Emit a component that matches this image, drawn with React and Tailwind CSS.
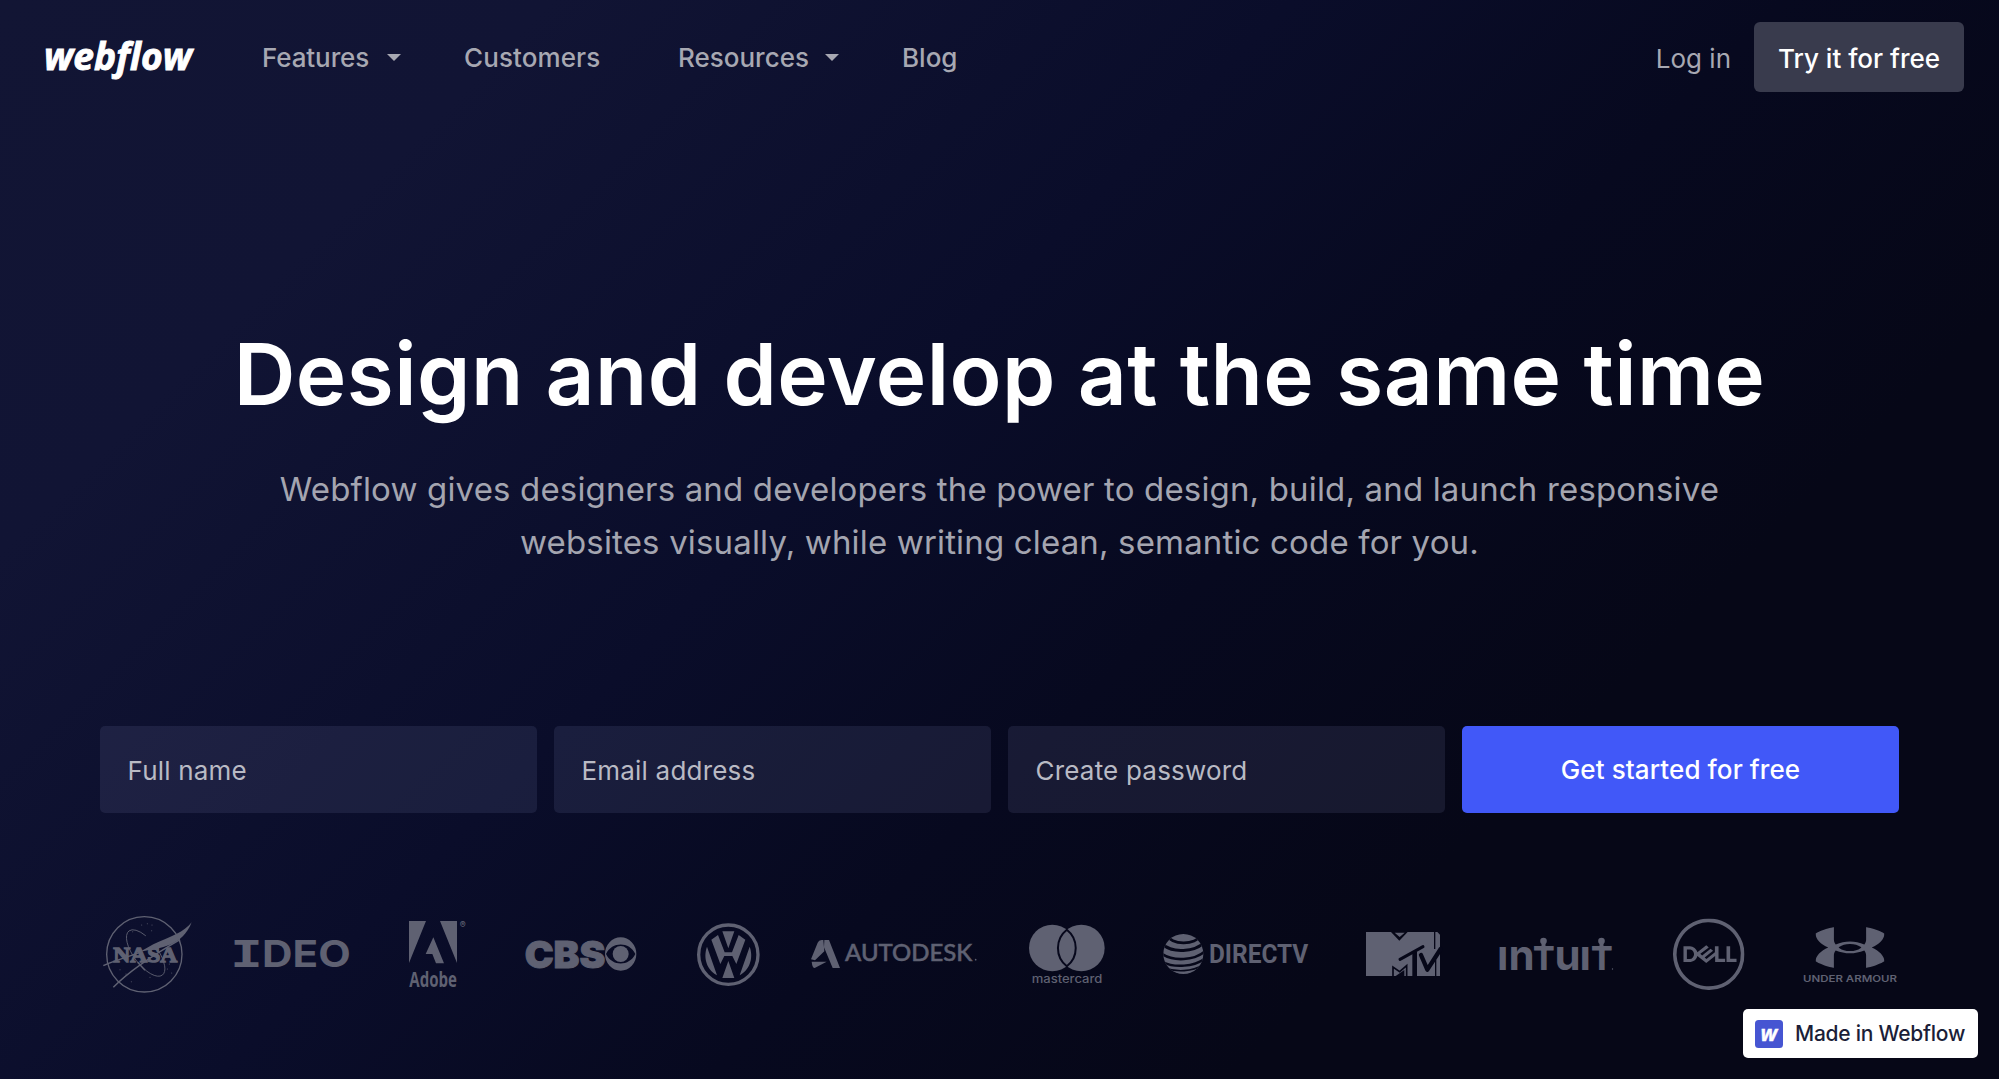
import { SiDell, SiUnderarmour } from "react-icons/si";

const INK = "#5f6172";

function Caret() {
  return (
    <svg width="14" height="7" viewBox="0 0 14 7" fill="currentColor">
      <path d="M0 0h14L7 7z" />
    </svg>
  );
}

function Wordmark() {
  return (
    <svg width="152" height="50" viewBox="44 32 152 50" className="shrink-0 overflow-visible">
      <text x="44" y="69.500" textLength="148" lengthAdjust="spacingAndGlyphs" fill="#fff" stroke="#fff" strokeWidth="0.9" fontFamily="'Open Sans', sans-serif" fontWeight="700" fontStyle="italic" fontSize="37.500">
        webflow
      </text>
    </svg>
  );
}

function Nasa() {
  return (
    <svg width="100" height="80" viewBox="30 45 300 240" fill={INK}>
      <circle cx="163" cy="166" r="113" fill="none" stroke={INK} strokeWidth="4" />
      <ellipse cx="167" cy="162" rx="83" ry="36" transform="rotate(53 167 162)" fill="none" stroke={INK} strokeWidth="2.500" strokeDasharray="250 60 400" />
      <path d="M305 70C285 98 240 114 190 136L150 158C215 148 278 140 305 70Z" />
      <path d="M70 265C112 222 190 168 270 122M40 200C58 190 90 182 150 160M143 190L165 214" fill="none" stroke={INK} strokeWidth="4.500" />
      <text x="70" y="188" textLength="192" lengthAdjust="spacingAndGlyphs" fontFamily="'Liberation Serif', serif" fontWeight="700" fontSize="66" stroke={INK} strokeWidth="4">NASA</text>
      {[[155, 78], [172, 74], [186, 78], [128, 98], [185, 95], [108, 225], [124, 248], [232, 210], [238, 195], [90, 212], [180, 235], [245, 222]].map(([x, y]) => (
        <circle key={x + "-" + y} cx={x} cy={y} r="1.500" />
      ))}
    </svg>
  );
}

function Ideo() {
  return (
    <svg width="123" height="80" viewBox="420 45 369 240" fill={INK} fontSize="110" fontWeight="700">
      <text x="420" y="205" textLength="99" lengthAdjust="spacingAndGlyphs" fontFamily="'DejaVu Sans Mono', monospace">I</text>
      <text x="516" y="205" textLength="266" lengthAdjust="spacingAndGlyphs" fontFamily="Inter, sans-serif">DEO</text>
    </svg>
  );
}

function Adobe() {
  return (
    <svg width="66" height="80" viewBox="945 45 198 240" fill={INK} className="overflow-visible">
      <path d="M957 66h51l-51 126zM1050 66h51v126zM1030 115l32 78h-24l-11-28h-20z" />
      <text x="958" y="264" textLength="143" lengthAdjust="spacingAndGlyphs" fontFamily="'Open Sans', sans-serif" fontWeight="700" fontSize="63">Adobe</text>
      <text x="1109" y="86" fontFamily="Inter, sans-serif" fontSize="27" fontWeight="600">®</text>
    </svg>
  );
}

function Cbs() {
  return (
    <svg width="118" height="80" viewBox="96 45 354 240" fill={INK}>
      <text x="104" y="207" textLength="242" lengthAdjust="spacingAndGlyphs" fontFamily="Inter, sans-serif" fontWeight="900" fontSize="111" stroke={INK} strokeWidth="3">CBS</text>
      <path fillRule="evenodd" d="M392 115a47 50 0 0 1 0 100a47 50 0 0 1 0-100zM348 165C366 203 418 203 436 165C418 127 366 127 348 165z" />
      <circle cx="392" cy="165" r="24" />
    </svg>
  );
}

function Volkswagen() {
  return (
    <svg width="67" height="80" viewBox="615 45 201 240" fill={INK}>
      <circle cx="715" cy="167" r="89" fill="none" stroke={INK} strokeWidth="10" />
      <path d="M697 97h36l-18 51zM715 186l18 51h-36z" />
      <path d="M664 122l20-14 20 52h22l20-52 20 14-27 73-12-24h-24l-12 24z" />
      <path d="M651 143C641 170 645 208 681 229zM779 143C789 170 785 208 749 229z" />
    </svg>
  );
}

function Autodesk() {
  return (
    <svg width="172" height="80" viewBox="954 45 516 240" fill={INK}>
      <path d="M963 181l20-50q3-8 12-8h5l3 34-28 27zM1003 123h14l33 84h-22l-26-62zM965 188h45l-36 19q-7 0-9-19z" />
      <text x="1065" y="185" textLength="382" lengthAdjust="spacingAndGlyphs" fontFamily="Lato, sans-serif" fontWeight="500" fontSize="67" stroke={INK} strokeWidth="1.500">AUTODESK</text>
      <circle cx="1457" cy="182" r="2.500" />
    </svg>
  );
}

function Mastercard() {
  return (
    <svg width="84" height="80" viewBox="105 45 252 240" fill={INK}>
      <circle cx="187" cy="147" r="70" />
      <circle cx="274" cy="147" r="70" />
      <path d="M230.500 92A70 70 0 0 0 230.500 202A70 70 0 0 0 230.500 92z" fill="none" stroke="#07081c" strokeWidth="6" />
      <text x="125" y="251" textLength="212" lengthAdjust="spacingAndGlyphs" fontFamily="Inter, sans-serif" fontWeight="500" fontSize="34">mastercard</text>
    </svg>
  );
}

function Directv() {
  return (
    <svg width="152" height="80" viewBox="510 45 456 240" fill={INK}>
      <clipPath id="globe"><circle cx="580" cy="165" r="60" /></clipPath>
      <g clipPath="url(#globe)">
        <rect x="518" y="103" width="124" height="124" />
        <g fill="none" stroke="#060719">
          <path d="M532 106C538 140 622 140 630 108" strokeWidth="8" />
          <path d="M515 134C545 164 615 160 645 128" strokeWidth="9" />
          <path d="M510 160C545 190 618 186 650 152" strokeWidth="8" />
          <path d="M515 187C550 208 615 204 648 176" strokeWidth="7" />
          <path d="M525 207C560 220 605 218 640 198" strokeWidth="5" />
        </g>
      </g>
      <text x="657" y="191" textLength="298" lengthAdjust="spacingAndGlyphs" fontFamily="Roboto, sans-serif" fontWeight="700" fontSize="75">DIRECTV</text>
    </svg>
  );
}

function Mtv() {
  return (
    <svg width="82" height="80" viewBox="1116 45 246 240" fill={INK}>
      <path d="M1128 99h75l25 26 25-26h89l8 8v124h-222zM1214 101h30l-15 13z" />
      <g fill="none" stroke="#060718">
        <path d="M1334 97V150M1337 182V232" strokeWidth="4" />
        <path d="M1230 181L1299 143" strokeWidth="9" strokeLinecap="round" />
        <path d="M1274 158V232" strokeWidth="14" />
        <path d="M1293 168L1312 212L1352 150" strokeWidth="13" strokeLinecap="round" strokeLinejoin="round" />
        <path d="M1209 232V204L1229 218L1250 200V232" strokeWidth="5" />
      </g>
      <path d="M1216 232l13-9 14-10v19z" fill="#060718" />
    </svg>
  );
}

function Intuit() {
  return (
    <svg width="120" height="80" viewBox="1496 915 120 80" fill={INK} fontFamily="Inter, sans-serif" fontWeight="800">
      <text y="971" fontSize="42">
        <tspan x="1497" fontWeight="700">ı</tspan>
        <tspan x="1508.500" fontWeight="700">n</tspan>
        <tspan x="1533" fontSize="32">T</tspan>
        <tspan x="1554.500" fontWeight="700">u</tspan>
        <tspan x="1579.500" fontWeight="700">ı</tspan>
        <tspan x="1591" fontSize="32">T</tspan>
      </text>
      <circle cx="1543.500" cy="942" r="3.300" />
      <circle cx="1601.500" cy="942" r="3.300" />
      <path d="M1541.500 943h4v6h-4zM1599.500 943h4v6h-4z" />
      <circle cx="1612.500" cy="970" r="0.700" />
    </svg>
  );
}

function Dell() {
  return (
    <svg width="74" height="80" viewBox="1672 915 74 80" fill={INK}>
      <SiDell x="1673" y="919.500" size={71.5} color={INK} />
    </svg>
  );
}

function UnderArmour() {
  return (
    <svg width="100" height="80" viewBox="1800 915 100 80" fill={INK}>
      <SiUnderarmour x="1815.500" y="914" size={69} color={INK} />
      <text x="1803" y="983" textLength="94" lengthAdjust="spacingAndGlyphs" fontFamily="Inter, sans-serif" fontWeight="600" fontSize="9">UNDER ARMOUR</text>
    </svg>
  );
}

function Field({ type, label }) {
  return (
    <input
      type={type}
      placeholder={label}
      aria-label={label}
      className="h-[87px] w-[437px] rounded-[5px] bg-[#8087b8]/14 px-[27.500px] pt-[2px] text-[26px] tracking-[0.200px] text-white outline-none placeholder:text-[#b9bac4]"
    />
  );
}

export default function App() {
  return (
    <div className="relative h-[1079px] w-[1999px] overflow-hidden bg-[linear-gradient(135deg,#121534_0%,#111434_18%,#0a0d2a_42%,#07091f_58%,#060717_75%,#060717_100%)] font-['Inter',sans-serif] text-white">
      <header className="flex h-[114px] items-center pr-[35px] pl-[44px] text-[26px] font-medium text-[#a7a8b2]">
        <Wordmark />
        <nav className="ml-[66px] flex items-center">
          <a className="flex w-[202px] items-center gap-[18px] tracking-[-0.1px]">Features <Caret /></a>
          <a className="w-[214px] tracking-[0.100px]">Customers</a>
          <a className="flex w-[224px] items-center gap-[16px]">Resources <Caret /></a>
          <a>Blog</a>
        </nav>
        <a className="mt-[3px] ml-auto font-normal">Log in</a>
        <button className="ml-[23px] h-[70px] w-[210px] rounded-[6px] bg-[#393b4d] pt-[3px] text-white">Try it for free</button>
      </header>

      <main className="flex flex-col items-center">
        <h1 className="mt-[210px] text-[85.500px] leading-[100px] font-semibold tracking-[0.420px] whitespace-nowrap">
          Design and develop at the same time
        </h1>
        <p className="mt-[39px] w-[1480px] text-center text-[33px] leading-[52.500px] tracking-[0.16px] text-[#a4a5b0]">
          Webflow gives designers and developers the power to design, build, and launch responsive websites visually, while writing clean, semantic code for you.
        </p>
        <form className="mt-[158px] flex gap-[17px]">
          <Field type="text" label="Full name" />
          <Field type="email" label="Email address" />
          <Field type="password" label="Create password" />
          <button type="button" className="h-[87px] w-[437px] rounded-[5px] bg-[#4158f8] text-[26px] font-medium tracking-[0.100px]">
            Get started for free
          </button>
        </form>
        <div className="mt-[101px] flex w-[1800px]">
          <Nasa />
          <div className="ml-[30px]"><Ideo /></div>
          <div className="ml-[52px]"><Adobe /></div>
          <div className="ml-[51px]"><Cbs /></div>
          <div className="ml-[55px]"><Volkswagen /></div>
          <div className="ml-[46px]"><Autodesk /></div>
          <div className="ml-[45px]"><Mastercard /></div>
          <div className="ml-[51px]"><Directv /></div>
          <div className="ml-[50px]"><Mtv /></div>
          <div className="ml-[52px]"><Intuit /></div>
          <div className="ml-[56px]"><Dell /></div>
          <div className="ml-[54px]"><UnderArmour /></div>
        </div>
      </main>

      <a className="absolute right-[21px] bottom-[21px] flex h-[49px] w-[235px] items-center gap-[12px] rounded-[5px] bg-white pl-[12px] text-[21px] font-medium tracking-[-0.250px] whitespace-nowrap text-[#1b1e38]">
        <svg width="28" height="28" viewBox="0 0 28 28" className="overflow-visible">
          <rect width="28" height="28" rx="3.500" fill="#4655d2" />
          <text x="5.500" y="20.500" textLength="16.500" lengthAdjust="spacingAndGlyphs" fill="#fff" stroke="#fff" strokeWidth="0.400" fontFamily="'Open Sans', sans-serif" fontWeight="700" fontStyle="italic" fontSize="22">w</text>
        </svg>
        Made in Webflow
      </a>
    </div>
  );
}
